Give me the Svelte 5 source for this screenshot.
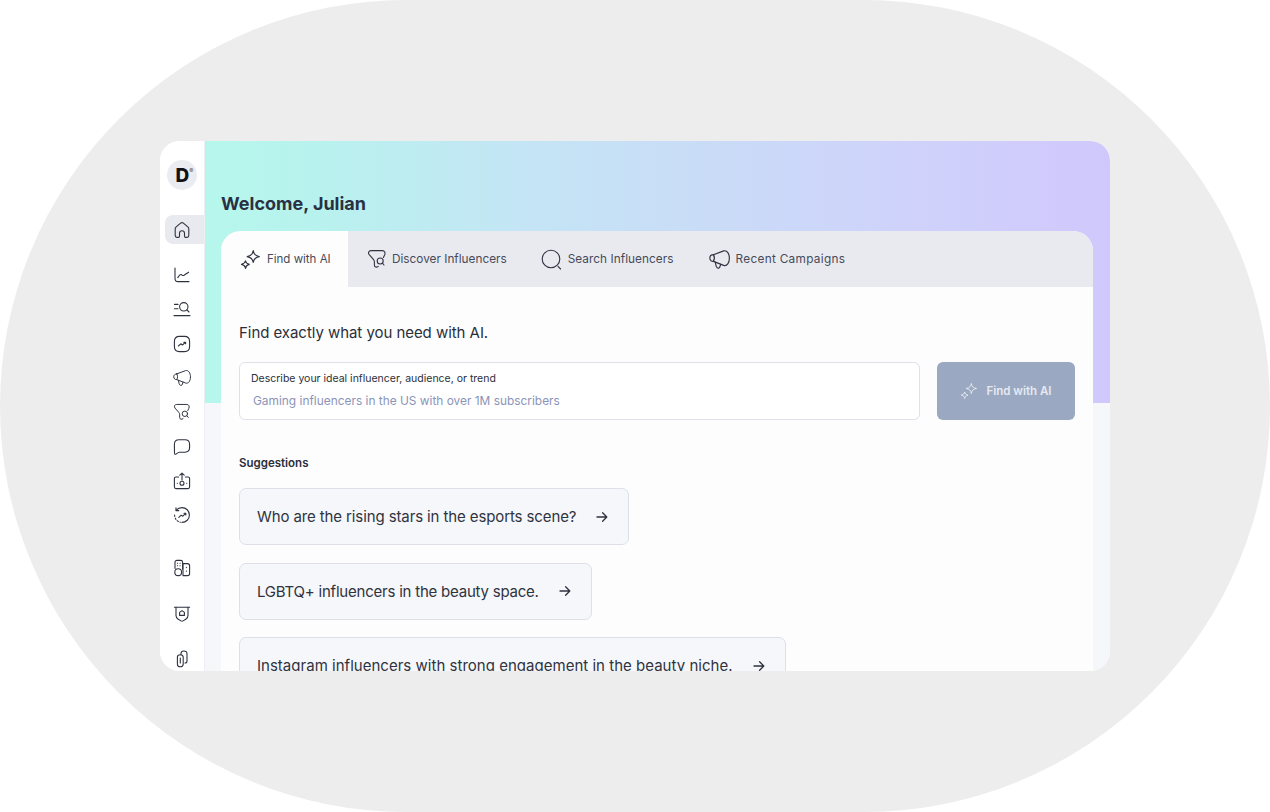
<script>
  const suggestions = [
    'Who are the rising stars in the esports scene?',
    'LGBTQ+ influencers in the beauty space.',
    'Instagram influencers with strong engagement in the beauty niche.'
  ];
</script>

{#snippet sparkle(size)}
  <svg width={size} height={size} viewBox="0 0 20 20" fill="none" stroke="currentColor" stroke-width="1.1" stroke-linejoin="round">
    <path d="M12.6 1.6 C13.1 5 14.6 6.6 18.4 7.2 C14.6 7.8 13.1 9.4 12.6 12.8 C12.1 9.4 10.6 7.8 6.8 7.2 C10.6 6.6 12.1 5 12.6 1.6Z"/>
    <path d="M5.2 11.2 C5.5 13 6.5 14 8.8 14.6 C6.5 15.2 5.5 16.2 5.2 18.4 C4.9 16.2 3.9 15.2 1.4 14.6 C3.9 14 4.9 13 5.2 11.2Z"/>
  </svg>
{/snippet}

{#snippet funnel(size)}
  <svg width={size} height={size} viewBox="0 0 20 20" fill="none" stroke="currentColor" stroke-width="1.1" stroke-linecap="round" stroke-linejoin="round">
    <path d="M16.4 8.4 L17.6 6 C18.6 3.8 17.6 1.6 15.4 1.6 H4 C1.8 1.6 .8 3.8 2.2 5.6 L6.4 10.4 C7.2 11.3 7.4 12 7.4 13.2 V16 C7.4 18.2 9.6 18.8 11.2 17.4"/>
    <circle cx="13.2" cy="12" r="3"/>
    <path d="M15.4 14.2 L17 16"/>
  </svg>
{/snippet}

{#snippet megaphone(size)}
  <svg width={size} height={size} viewBox="0 0 20 20" fill="none" stroke="currentColor" stroke-width="1.1" stroke-linecap="round" stroke-linejoin="round">
    <path d="M4.2 5.4 L14 1.8 C17.4 1 19.4 4.6 19.4 8.8 C19.4 13.2 17.2 16.6 14 15.6 L4.2 11.8"/>
    <path d="M4.2 5.4 C2 5.4 .8 7 .8 8.6 C.8 10.6 2.4 12 4.2 11.8 C5.4 9.8 5.4 7.4 4.2 5.4Z"/>
    <path d="M6 12.6 L6.8 16.4 C7.2 18 9 18.8 10 17.8 L11.2 14.6"/>
  </svg>
{/snippet}

<div class="stage">
  <div class="window">
    <aside class="rail">
      <div class="logo"><span class="d">D</span><span class="reg">®</span></div>

      <div class="item home active">
        <svg width="18" height="18" viewBox="0 0 18 18" fill="none" stroke="currentColor" stroke-width="1.1" stroke-linejoin="round">
          <path d="M2.2 14.6 V7.8 C2.2 7 2.6 6.3 3.2 5.8 L7.6 2.1 C8.4 1.5 9.6 1.5 10.4 2.1 L14.8 5.8 C15.4 6.3 15.8 7 15.8 7.8 V14.6 C15.8 15.6 15 16.4 14 16.4 H12.6 C12 16.4 11.5 15.9 11.5 15.3 V12.2 C11.5 10.8 10.4 9.8 9 9.8 C7.6 9.8 6.5 10.8 6.5 12.2 V15.3 C6.5 15.9 6 16.4 5.4 16.4 H4 C3 16.4 2.2 15.6 2.2 14.6Z"/>
        </svg>
      </div>

      <div class="group">
        <div class="item">
          <svg width="18" height="18" viewBox="0 0 18 18" fill="none" stroke="currentColor" stroke-width="1.1" stroke-linecap="round" stroke-linejoin="round">
            <path d="M2 2 V12.5 C2 14.5 3.2 15.6 5 15.6 H16"/>
            <path d="M4.8 11.6 C6 9.6 7.2 8.2 8.2 8.6 C9.2 9 9.6 10 10.8 9.4 C12.4 8.6 13.6 7.4 15.6 6.2"/>
          </svg>
        </div>
        <div class="item">
          <svg width="18" height="18" viewBox="0 0 18 18" fill="none" stroke="currentColor" stroke-width="1.1" stroke-linecap="round">
            <path d="M1.5 4.4 H5 M1.5 8.8 H5 M1 15.6 H17"/>
            <circle cx="10.8" cy="6.8" r="4.2"/>
            <path d="M13.9 9.9 L16 12"/>
          </svg>
        </div>
        <div class="item">
          <svg width="18" height="18" viewBox="0 0 18 18" fill="none" stroke="currentColor" stroke-width="1.1" stroke-linecap="round" stroke-linejoin="round">
            <path d="M6.5 1.4 H11.5 C15 1.4 16.6 3 16.6 6.5 V11.5 C16.6 15 15 16.6 11.5 16.6 H6.5 C3 16.6 1.4 15 1.4 11.5 V6.5 C1.4 3 3 1.4 6.5 1.4Z"/>
            <path d="M5.4 11 L7.8 8.8 L9.4 10 L12.4 7.4 M10.8 7.2 H12.6 V8.8"/>
          </svg>
        </div>
        <div class="item">{@render megaphone(18)}</div>
        <div class="item">{@render funnel(18)}</div>
        <div class="item">
          <svg width="18" height="18" viewBox="0 0 18 18" fill="none" stroke="currentColor" stroke-width="1.1" stroke-linejoin="round">
            <path d="M6 1.8 H12 C15.2 1.8 16.6 3.2 16.6 6.4 V9.6 C16.6 12.8 15.2 14.2 12 14.2 H6.6 C5.4 14.2 4.6 14.8 3.4 15.8 C2.4 16.6 1.6 16.4 1.5 15.2 L1.4 6.4 C1.4 3.2 2.8 1.8 6 1.8Z"/>
          </svg>
        </div>
        <div class="item">
          <svg width="18" height="18" viewBox="0 0 18 18" fill="none" stroke="currentColor" stroke-width="1.1" stroke-linecap="round" stroke-linejoin="round">
            <path d="M5.6 5 H3 C2 5 1.4 5.6 1.4 6.6 V15 C1.4 16 2 16.6 3 16.6 L15 16.6 C16 16.6 16.6 16 16.6 15 V6.6 C16.6 5.6 16 5 15 5 H12.4"/>
            <path d="M9 8 V1.2 M6.8 3.2 L9 1.2 L11.2 3.2"/>
            <circle cx="9" cy="11.2" r="2"/>
            <path d="M4.2 11.2 H4.4 M13.6 11.2 H13.8"/>
          </svg>
        </div>
        <div class="item">
          <svg width="18" height="18" viewBox="0 0 18 18" fill="none" stroke="currentColor" stroke-width="1.1" stroke-linecap="round" stroke-linejoin="round">
            <path d="M3.2 4.2 C4.6 2.6 6.6 1.6 9 1.6 C13.1 1.6 16.4 4.9 16.4 9 C16.4 13.1 13.1 16.4 9 16.4"/>
            <path d="M1.6 9 C1.6 12.6 4 15.6 7.4 16.2" stroke-dasharray="1.4 1.8"/>
            <path d="M3 1.8 V4.6 H5.8"/>
            <path d="M5.8 11.4 L8.2 9.2 L9.8 10.2 L12.6 7.4 M11 7.2 H12.8 V9"/>
          </svg>
        </div>
      </div>

      <div class="group wide">
        <div class="item">
          <svg width="18" height="18" viewBox="0 0 18 18" fill="none" stroke="currentColor" stroke-width="1.1" stroke-linecap="round" stroke-linejoin="round">
            <path d="M2 9.4 V3.2 C2 2 2.8 1.4 4 1.4 H7.6 C8.8 1.4 9.6 2 9.6 3.2 V10"/>
            <path d="M4.4 4.2 H4.6 M7 4.2 H7.2 M4.4 6.8 H4.6 M7 6.8 H7.2"/>
            <circle cx="5.2" cy="13.2" r="3.4"/>
            <path d="M10 4.6 H14.4 C15.8 4.6 16.6 5.4 16.6 6.8 V14.4 C16.6 15.8 15.8 16.6 14.4 16.6 H10 Z"/>
            <path d="M13.4 8.4 V8.6 M13.4 12 V12.2"/>
          </svg>
        </div>
        <div class="item">
          <svg width="18" height="18" viewBox="0 0 18 18" fill="none" stroke="currentColor" stroke-width="1.1" stroke-linecap="round" stroke-linejoin="round">
            <path d="M1.4 2.2 H16.6"/>
            <path d="M3 2.2 V10.6 C3 12.4 3.8 13.4 5.2 14.2 L8 15.9 C8.6 16.3 9.4 16.3 10 15.9 L12.8 14.2 C14.2 13.4 15 12.4 15 10.6 V2.2"/>
            <path d="M9 5.6 L11.4 7.4 V10.4 H6.6 V7.4 Z"/>
          </svg>
        </div>
        <div class="item">
          <svg width="18" height="18" viewBox="0 0 18 18" fill="none" stroke="currentColor" stroke-width="1.1" stroke-linecap="round" stroke-linejoin="round">
            <path d="M8 4.8 V3.5 C8 2 9.2 1 10.8 1 C12.6 1 14 2.2 14 3.8 V11 C14 12.4 13 13 12 13"/>
            <path d="M4.4 7 C4.4 5.4 5.6 4.8 7.2 4.8 C9 4.8 10.2 5.6 10.2 7.2 V14 C10.2 15.8 9 16.8 7.2 16.8 C5.6 16.8 4.4 15.8 4.4 14 Z"/>
            <path d="M7.3 8 V13"/>
          </svg>
        </div>
      </div>
    </aside>

    <main class="main">
      <h1>Welcome, Julian</h1>
      <section class="card">
        <nav class="tabs">
          <div class="tab active"><span class="ticon">{@render sparkle(21)}</span>Find with AI</div>
          <div class="tab discover"><span class="ticon">{@render funnel(20)}</span>Discover Influencers</div>
          <div class="tab search-tab">
            <span class="ticon">
              <svg width="21" height="21" viewBox="0 0 21 21" fill="none" stroke="currentColor" stroke-width="1.1" stroke-linecap="round">
                <circle cx="10" cy="10" r="8.8"/>
                <path d="M17 17.4 L19.6 20"/>
              </svg>
            </span>Search Influencers
          </div>
          <div class="tab recent"><span class="ticon">{@render megaphone(21)}</span>Recent Campaigns</div>
        </nav>

        <div class="body">
          <p class="lead">Find exactly what you need with AI.</p>
          <div class="search">
            <div class="field">
              <span class="label">Describe your ideal influencer, audience, or trend</span>
              <span class="placeholder">Gaming influencers in the US with over 1M subscribers</span>
            </div>
            <button class="go">{@render sparkle(18)}<span>Find with AI</span></button>
          </div>

          <h2>Suggestions</h2>
          <div class="list">
            {#each suggestions as s}
              <div class="chip">
                <span>{s}</span>
                <svg width="12" height="12" viewBox="0 0 12 12" fill="none" stroke="currentColor" stroke-width="1.3" stroke-linecap="round" stroke-linejoin="round">
                  <path d="M1 6 H10.6 M6.6 1.8 L10.8 6 L6.6 10.2"/>
                </svg>
              </div>
            {/each}
          </div>
        </div>
      </section>
    </main>
  </div>
</div>

<style>
  :global(body) { margin: 0; background: #fff; }
  .stage {
    width: 1270px;
    height: 812px;
    border-radius: 406px;
    background: #ededed;
    display: flex;
    align-items: center;
    justify-content: center;
    font-family: Inter, "Noto Sans", sans-serif;
    color: #2b2f3a;
    overflow: hidden;
  }
  .window {
    width: 950px;
    height: 530px;
    border-radius: 20px;
    overflow: hidden;
    display: flex;
    background: #fff;
  }
  .rail {
    flex: none;
    width: 39px;
    border-right: 1px solid #eceef3;
    display: flex;
    flex-direction: column;
    align-items: stretch;
    padding: 19px 0 0 5px;
    background: #fff;
  }
  .logo {
    flex: none;
    width: 30px;
    height: 30px;
    margin-left: 2px;
    margin-bottom: 25px;
    border-radius: 50%;
    background: #ebecf1;
    display: flex;
    align-items: center;
    justify-content: center;
    color: #111;
    padding-left: 5px;
    box-sizing: border-box;
  }
  .d { font-size: 19px; font-weight: 800; line-height: 1; }
  .reg { font-size: 6px; align-self: flex-start; margin-top: 8px; color: #555; line-height: 1; }
  .item {
    flex: none;
    height: 34.3px;
    display: flex;
    align-items: center;
    padding-left: 8px;
    color: #2f3340;
  }
  .home {
    height: 29px;
    border-radius: 8px 0 0 8px;
    background: #e9eaf0;
    margin-bottom: 14px;
  }
  .group { flex: none; }
  .wide { margin-top: 18.5px; display: flex; flex-direction: column; gap: 11.2px; }
  .main {
    flex: 1;
    min-width: 0;
    padding: 0 17px 0 16px;
    background: linear-gradient(90deg, #b6f7ec 0%, #b8f2ee 12%, #c4e5f5 35%, #c9dcf7 55%, #cfd2fb 78%, #d0c8fc 100%) top / 100% 262px no-repeat, #f6f7fb;
  }
  h1 {
    margin: 52px 0 17px;
    font-size: 18px;
    line-height: 21px;
    font-weight: 700;
    color: #293042;
  }
  .card {
    background: #fdfdfe;
    border-radius: 20px 20px 0 0;
    overflow: hidden;
  }
  .tabs {
    display: flex;
    height: 56px;
    background: #e9eaf0;
  }
  .tab {
    display: flex;
    align-items: center;
    gap: 6px;
    padding: 0 15px 0 19px;
    font-size: 11.8px;
    color: #464b59;
    white-space: nowrap;
  }
  .tab.active { background: #fdfdfe; width: 127px; box-sizing: border-box; font-size: 11.5px; }
  .tab.discover { gap: 5px; }
  .tab.search-tab { padding-right: 16px; letter-spacing: 0.05px; }
  .tab.recent { letter-spacing: 0.3px; }
  .ticon { display: flex; color: #2f3340; }
  .body { padding: 36px 18px 0; background: #fdfdfe; }
  .lead { margin: 0 0 19px; font-size: 15px; line-height: 20px; color: #2b2f3a; letter-spacing: -0.05px; }
  .search { display: flex; gap: 17px; }
  .field {
    flex: 1;
    height: 58px;
    box-sizing: border-box;
    border: 1px solid #dfe1ea;
    border-radius: 6px;
    display: flex;
    flex-direction: column;
    padding: 9px 11px 0;
    background: #fff;
  }
  .label { font-size: 10.5px; line-height: 14px; color: #2b2f3a; }
  .placeholder { font-size: 11.9px; line-height: 18px; margin: 6px 0 0 2px; color: #8b94b8; }
  .go {
    width: 138px;
    height: 58px;
    border: 0;
    border-radius: 6px;
    background: #9aa8c1;
    color: #e6e9f0;
    display: flex;
    align-items: center;
    justify-content: center;
    gap: 8px;
    font: 600 11.5px Inter, sans-serif;
    padding: 0;
  }
  h2 {
    margin: 35px 0 17px;
    font-size: 11.5px;
    line-height: 16px;
    font-weight: 600;
    color: #2b2f3a;
  }
  .list { display: flex; flex-direction: column; gap: 17.6px; align-items: flex-start; }
  .chip {
    flex: none;
    height: 57px;
    box-sizing: border-box;
    display: flex;
    align-items: center;
    gap: 20px;
    padding: 0 20px 0 17px;
    border: 1px solid #dde0e9;
    border-radius: 7px;
    background: #f6f7fa;
    font-size: 15px;
    color: #2f3340;
    white-space: nowrap;
  }
  .chip:nth-child(1) { letter-spacing: -0.11px; }
  .chip:nth-child(2) { letter-spacing: -0.22px; }
  .chip:nth-child(3) { letter-spacing: 0.02px; }
</style>
